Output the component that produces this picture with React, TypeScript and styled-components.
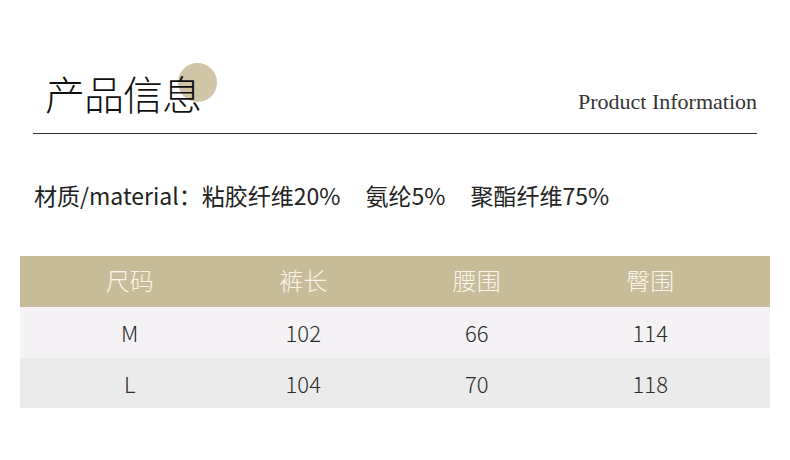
import React from 'react'
import styled, { createGlobalStyle } from 'styled-components'

const GlobalStyle = createGlobalStyle`
  body {
    margin: 0;
    background: #ffffff;
  }
`

const sizes = [
  { size: 'M', length: 102, waist: 66, hip: 114 },
  { size: 'L', length: 104, waist: 70, hip: 118 },
]

const App = () => {
  return (
    <Page>
      <GlobalStyle />
      <Header>
        <Title>
          <Dot />
          <TitleText>产品信息</TitleText>
        </Title>
        <Subtitle>Product Information</Subtitle>
      </Header>
      <Material>
        <span>材质/material：粘胶纤维20%</span>
        <span>氨纶5%</span>
        <span>聚酯纤维75%</span>
      </Material>
      <Table>
        <HeadRow>
          <Cell>尺码</Cell>
          <Cell>裤长</Cell>
          <Cell>腰围</Cell>
          <Cell>臀围</Cell>
        </HeadRow>
        {sizes.map((row, i) => (
          <Row key={row.size} $shade={i % 2 === 1}>
            <Cell>{row.size}</Cell>
            <Cell>{row.length}</Cell>
            <Cell>{row.waist}</Cell>
            <Cell>{row.hip}</Cell>
          </Row>
        ))}
      </Table>
    </Page>
  )
}

export default App

const Page = styled.div`
  width: 790px;
  height: 460px;
  overflow: hidden;
  padding-top: 68px;
  box-sizing: border-box;
  font-family: "Noto Sans CJK SC", "Noto Sans", sans-serif;
`
const Header = styled.div`
  display: flex;
  justify-content: space-between;
  align-items: flex-end;
  margin: 0 33px;
  padding: 0 0 15px 12px;
  border-bottom: 1px solid #333;
`
const Title = styled.div`
  position: relative;
  height: 50px;
`
const Dot = styled.div`
  position: absolute;
  left: 133px;
  top: -5px;
  width: 39px;
  height: 39px;
  border-radius: 50%;
  background: #d0c5a6;
`
const TitleText = styled.div`
  position: relative;
  font-size: 40px;
  line-height: 50px;
  font-weight: 300;
  color: #111;
  letter-spacing: -1px;
`
const Subtitle = styled.div`
  font-family: "Liberation Serif", serif;
  font-size: 22px;
  line-height: 24px;
  color: #333;
  margin-bottom: 4px;
`
const Material = styled.div`
  display: flex;
  gap: 25px;
  padding: 46px 0 0 34px;
  height: 80px;
  box-sizing: border-box;
  font-size: 23px;
  line-height: 30px;
  color: #222;
`
const Table = styled.div`
  margin: 42px 20px 0;
  width: 750px;
`
const HeadRow = styled.div`
  display: grid;
  grid-template-columns: repeat(4, 173.5px);
  box-sizing: border-box;
  padding: 0 0 5px 23px;
  height: 51px;
  align-items: center;
  background: #c8bb99;
  color: #faf6ea;
  font-size: 24px;
  font-weight: 300;
`
const Row = styled.div<{ $shade: boolean }>`
  display: grid;
  grid-template-columns: repeat(4, 173.5px);
  padding-left: 23px;
  height: 50.5px;
  align-items: center;
  background: ${p => (p.$shade ? '#ecebec' : '#f4f2f4')};
  color: #2a2a2a;
  font-size: 22px;
  font-weight: 300;
`
const Cell = styled.div`
  text-align: center;
`
